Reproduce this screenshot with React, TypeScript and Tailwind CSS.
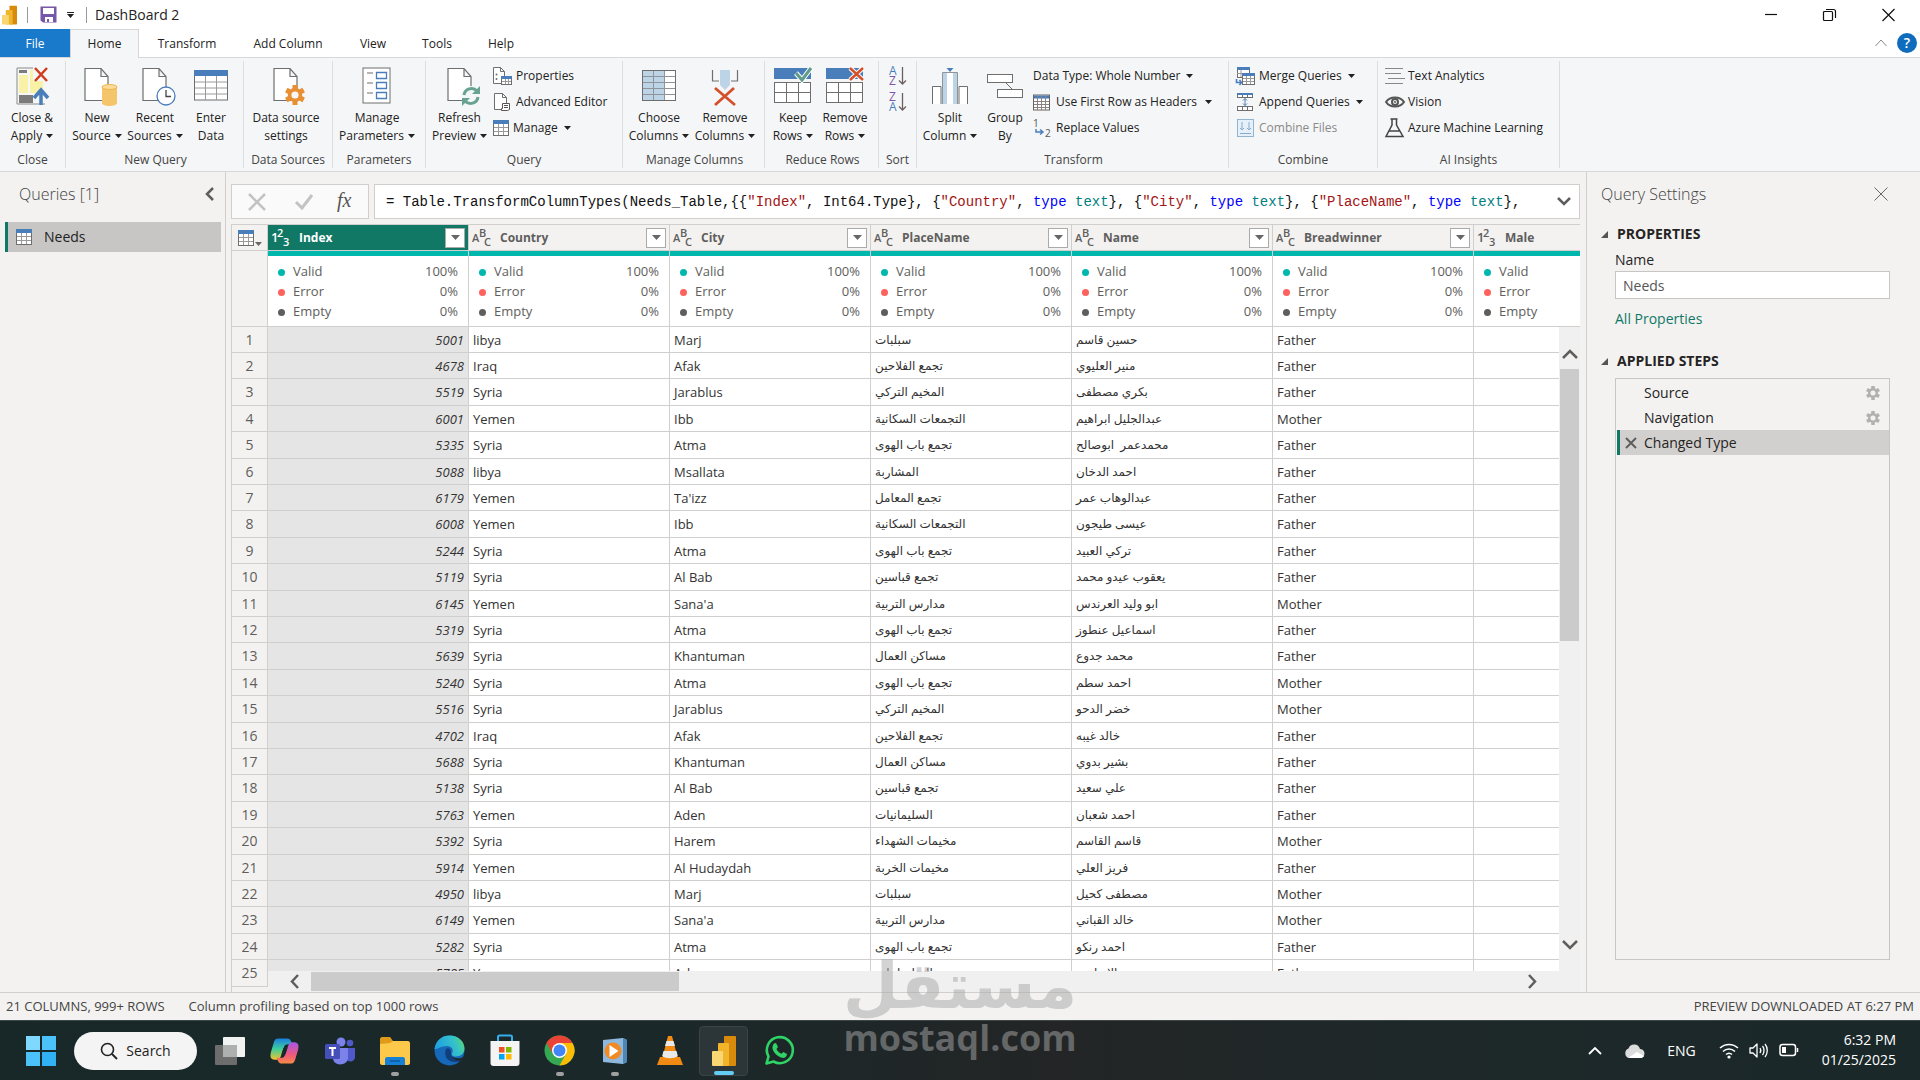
import React from "react";

type Children = { children?: React.ReactNode };

/* ---------- shared glyphs ---------- */

function Caret({ className = "text-[#222]" }: { className?: string }) {
  return (
    <svg width="7" height="4" viewBox="0 0 7 4" className={`inline-block shrink-0 ${className}`} aria-hidden="true">
      <path d="M0 0h7L3.5 4z" fill="currentColor" />
    </svg>
  );
}

function Svg({ w, h, children }: { w: number; h: number } & Children) {
  return (
    <svg width={w} height={h} viewBox={`0 0 ${w} ${h}`} fill="none" className="shrink-0 overflow-visible" aria-hidden="true">
      {children}
    </svg>
  );
}

const gray = "#6e6e6e";
const blue = "#4a7ebb";

function Doc() {
  return <path d="M1 1.5h16l7 8V33.500H1z M17 1.500v8h7" fill="#fff" stroke={gray} strokeWidth="1.200" />;
}

const gearTeeth = [0, 60, 120];

function Gear({ cx, cy, r, color, hole }: { cx: number; cy: number; r: number; color: string; hole: string }) {
  return (
    <g>
      {gearTeeth.map((a) => (
        <rect key={a} x={cx - r * 0.25} y={cy - r} width={r * 0.5} height={r * 2} fill={color} transform={`rotate(${a} ${cx} ${cy})`} />
      ))}
      <circle cx={cx} cy={cy} r={r * 0.72} fill={color} />
      <circle cx={cx} cy={cy} r={r * 0.36} fill={hole} />
    </g>
  );
}

/* ---------- large ribbon icons ---------- */

const CloseApplyIcon = () => (
  <Svg w={32} h={40}>
    <path d="M1 1h16M1 1v36h28" stroke="#8a8a8a" />
    <rect x="3" y="3" width="8" height="3" fill="#7b7b7b" />
    <path d="M3 8h9v18H3z M14 3h3v11h10v12H14z" fill="#f9f1a5" />
    <rect x="3" y="28" width="14" height="8" fill="#7b7b7b" />
    <path d="M19 1l12 13M31 1L19 14" stroke="#d13c1d" strokeWidth="2.500" />
    <path d="M25 38V25M18 31l7-8 7 8" stroke={blue} strokeWidth="3.500" />
  </Svg>
);
const NewSourceIcon = () => (
  <Svg w={34} h={40}>
    <Doc />
    <path d="M18 20v16c0 4 15 4 15 0V20z" fill="#f4c56a" />
    <ellipse cx="25.500" cy="20" rx="7.500" ry="2.500" fill="#fbdc9a" stroke="#efb548" />
  </Svg>
);
const RecentIcon = () => (
  <Svg w={34} h={40}>
    <Doc />
    <circle cx="24" cy="29" r="9" fill="#fff" stroke={blue} strokeWidth="1.300" />
    <path d="M24 23v6.500h5" stroke="#444" strokeWidth="1.300" />
  </Svg>
);
const TableIcon = () => (
  <Svg w={34} h={40}>
    <rect x="0.500" y="4" width="33" height="29" fill="#fff" stroke={gray} />
    <rect x="0" y="3" width="34" height="6" fill={blue} />
    <path d="M1 15h32M1 21h32M1 27h32M11.500 9v24M22.500 9v24" stroke="#9a9a9a" />
  </Svg>
);
const DataSourceIcon = () => (
  <Svg w={34} h={40}>
    <Doc />
    <Gear cx={22} cy={28} r={10} color="#e98f33" hole="#f5f6f7" />
  </Svg>
);
const ParamsIcon = () => (
  <Svg w={30} h={40}>
    <rect x="1" y="1" width="27" height="35" fill="#fff" stroke={gray} />
    <path d="M5 6h6M5 16h6M5 26h6" stroke={gray} />
    <path d="M14.500 5.500h10v6h-10zM14.500 15.500h10v6h-10zM14.500 25.500h10v6h-10z" stroke={blue} strokeWidth="1.300" />
  </Svg>
);
const RefreshIcon = () => (
  <Svg w={34} h={40}>
    <Doc />
    <circle cx="24" cy="29" r="10" fill="#f5f6f7" />
    <path d="M17 28a7.500 7.500 0 0 1 13-4M31 30a7.500 7.500 0 0 1-13 4" stroke="#67a390" strokeWidth="3" />
    <path d="M33 19v8h-8zM15 39v-8h8z" fill="#67a390" />
  </Svg>
);
const ChooseColumnsIcon = () => (
  <Svg w={34} h={40}>
    <rect x="0.500" y="3.500" width="33" height="30" fill="#fff" stroke={gray} />
    <rect x="1" y="4" width="22" height="29" fill="#bdd3e6" />
    <path d="M1 9.500h32M1 15.500h32M1 21.500h32M1 27.500h32M11.500 4v29M22.500 4v29" stroke="#8e9499" />
  </Svg>
);
const RemoveColumnsIcon = () => (
  <Svg w={30} h={40}>
    <path d="M2.500 3v11H9M27.500 3v11H21" stroke={gray} strokeWidth="1.200" />
    <path d="M10 3h10v15l-5 5-5-5z" fill="#bdd3e6" />
    <path d="M5 21l20 17M24 21L5 38" stroke="#d4502b" strokeWidth="2.800" />
  </Svg>
);
const KeepRowsIcon = () => (
  <Svg w={38} h={40}>
    <rect x="0" y="1" width="37" height="11" fill={blue} />
    <rect x="0.500" y="15.500" width="36" height="20" fill="#fff" stroke={gray} />
    <path d="M1 25.500h35M12.500 16v19M24.500 16v19" stroke={gray} />
    <path d="M22 6l6 7L37 1" stroke="#fff" strokeWidth="5" />
    <path d="M22 6l6 7L37 1" stroke="#5f9c8a" strokeWidth="3" />
  </Svg>
);
const RemoveRowsIcon = () => (
  <Svg w={38} h={40}>
    <rect x="0" y="1" width="37" height="11" fill={blue} />
    <rect x="0.500" y="15.500" width="36" height="20" fill="#fff" stroke={gray} />
    <path d="M1 25.500h35M12.500 16v19M24.500 16v19" stroke={gray} />
    <path d="M24 1l13 12M37 1L24 13" stroke="#fff" strokeWidth="4.500" />
    <path d="M24 1l13 12M37 1L24 13" stroke="#d4502b" strokeWidth="2.500" />
  </Svg>
);
const SplitIcon = () => (
  <Svg w={38} h={40}>
    <path d="M1.500 37V19.500H10V37M36.500 37V19.500H28V37" fill="#fff" stroke={gray} />
    <path d="M11.500 37V5.500h15V37" fill="#bdd3e6" stroke="#8e9499" />
    <rect x="16" y="6" width="6" height="31" fill="#fff" />
    <path d="M15.500 1h7L19 5z" fill={blue} />
  </Svg>
);
const GroupByIcon = () => (
  <Svg w={38} h={40}>
    <path d="M20 16l6 6" stroke={gray} />
    <rect x="1.500" y="7.500" width="25" height="8" fill="#fff" stroke={gray} />
    <rect x="11.500" y="22.500" width="25" height="8" fill="#fff" stroke={gray} />
  </Svg>
);

/* ---------- small ribbon icons ---------- */

const PropertiesIcon = () => (
  <Svg w={19} h={18}>
    <path d="M0.500 0.500h7l4 4V16.500h-11zM7.500 0.500v4h4" fill="#fff" stroke={gray} />
    <circle cx="3.500" cy="7.500" r="1" fill={gray} /><circle cx="3.500" cy="12" r="1" fill={gray} />
    <rect x="8.500" y="9.500" width="10" height="8" fill="#fff" stroke={gray} />
    <rect x="8" y="9" width="11" height="3" fill={blue} />
    <path d="M9 14.500h9M12.500 12v5M15.500 12v5" stroke="#999" />
  </Svg>
);
const AdvancedIcon = () => (
  <Svg w={19} h={18}>
    <path d="M1.500 0.500h8l4 4V16.500h-12zM9.500 0.500v4h4" fill="#fff" stroke={gray} />
    <path d="M9.500 10.500h7v6l-2 1h-6v-2h1z" fill="#fff" stroke="#5a5252" />
    <path d="M11 12.500h4M11 14.500h4" stroke="#5a5252" />
  </Svg>
);
const SmallTable = () => (
  <Svg w={16} h={16}>
    <rect x="0.500" y="0.500" width="15" height="15" fill="#fff" stroke={gray} />
    <rect width="16" height="4" fill={blue} />
    <path d="M1 7.500h14M1 11.500h14M5.500 4v11M10.500 4v11" stroke="#9a9a9a" />
  </Svg>
);
const HeadersIcon = () => (
  <Svg w={17} h={17}>
    <rect x="0.500" y="1" width="16" height="15" fill="#fff" stroke="#6a6060" />
    <rect x="1" y="1.500" width="15" height="3" fill={blue} />
    <path d="M1 7.500h15M1 10.500h15M1 13.500h15M4.500 2v14M8.500 2v14M12.500 2v14" stroke="#8a8282" />
  </Svg>
);
const ReplaceIcon = () => (
  <Svg w={19} h={18}>
    <text x="0" y="8" fontSize="10" fill="#555" fontFamily="Open Sans, sans-serif">1</text>
    <text x="12" y="18" fontSize="10" fill="#555" fontFamily="Open Sans, sans-serif">2</text>
    <path d="M3 10v3h6M7 10.500l3 2.500-3 2.500" stroke={blue} strokeWidth="1.500" />
  </Svg>
);
const MergeIcon = () => (
  <Svg w={19} h={18}>
    <rect x="1.500" y="0.500" width="12" height="10" fill="#fff" stroke={gray} /><rect x="1" width="13" height="3" fill={blue} />
    <path d="M1 6.500h6M5 3v7" stroke="#999" />
    <rect x="6.500" y="6.500" width="12" height="11" fill="#fff" stroke={gray} /><rect x="6" y="6" width="13" height="3" fill={blue} />
    <path d="M7 11.500h11M7 14.500h11M10.500 9v8M14.500 9v8" stroke="#999" />
    <path d="M0.500 12v3.500H5M3.500 13l2 2.500-2 2.500" stroke={blue} strokeWidth="1.600" />
  </Svg>
);
const AppendIcon = () => (
  <Svg w={19} h={18}>
    <rect x="1.500" y="0.500" width="15" height="4" fill="#fff" stroke={gray} /><rect x="1" width="16" height="2" fill={blue} />
    <rect x="1.500" y="13.500" width="15" height="4" fill="#fff" stroke={gray} />
    <path d="M6.500 2v2M11.500 2v2M6.500 14v3M11.500 14v3" stroke={gray} />
    <path d="M9 5.500v7M7 7.500l2-2 2 2M7 10.500l2 2 2-2" stroke={blue} />
  </Svg>
);
const CombineIcon = () => (
  <Svg w={19} h={18}>
    <rect x="1.500" y="0.500" width="16" height="17" fill="#e6f0f8" stroke="#92b4d3" />
    <path d="M6 3v8M4 9l2 2 2-2M13 3v8M11 9l2 2 2-2M4 14.500h11" stroke="#86abce" />
  </Svg>
);
const TextAnalyticsIcon = () => (
  <Svg w={20} h={18}><path d="M0 1.500h18M0 6.500h16M3 11.500h17M0 16.500h18" stroke="#888" /></Svg>
);
const VisionIcon = () => (
  <Svg w={20} h={18}>
    <path d="M1 9c4-6 14-6 18 0-4 6-14 6-18 0z" stroke="#555" strokeWidth="2" />
    <circle cx="10" cy="9" r="3" stroke="#555" strokeWidth="2" /><circle cx="10" cy="9" r="1" fill="#555" />
  </Svg>
);
const FlaskIcon = () => (
  <Svg w={20} h={20}>
    <path d="M5.500 1h7M7 1v6L1 18.500h17L11.500 7V1M4 13h11" stroke="#444" strokeWidth="1.500" />
  </Svg>
);
const SortIcon = ({ top, bottom, topColor, bottomColor }: { top: string; bottom: string; topColor: string; bottomColor: string }) => (
  <Svg w={18} h={20}>
    <text x="0" y="9" fontSize="12" fill={topColor} fontFamily="Open Sans, sans-serif">{top}</text>
    <text x="0" y="19" fontSize="12" fill={bottomColor} fontFamily="Open Sans, sans-serif">{bottom}</text>
    <path d="M13.500 1v17M10 14.500l3.500 3.500 3.500-3.500" stroke="#6a6060" strokeWidth="1.300" />
  </Svg>
);

/* ---------- ribbon ---------- */

function Group({ label, className, children }: { label: string; className: string } & Children) {
  return (
    <section className={`flex h-[107px] shrink-0 flex-col border-r border-[#dcdddf] ${className}`} aria-label={label}>
      <div className="flex flex-1 items-start">{children}</div>
      <div className="h-[17px] text-center text-xs leading-[17px] text-[#444]">{label}</div>
    </section>
  );
}

function Big({ icon, top, bottom, caret, className, doc }: { icon: React.ReactNode; top: string; bottom: string; caret?: boolean; doc?: boolean; className: string }) {
  return (
    <button type="button" className={`flex shrink-0 flex-col items-center pt-1.5 ${className}`}>
      <span className={`flex h-[42px] items-start ${doc ? "pl-2" : ""}`}>{icon}</span>
      <span className="whitespace-nowrap leading-[18px]">{top}</span>
      <span className="flex items-center gap-1 whitespace-nowrap leading-[18px]">
        {bottom}
        {caret && <Caret />}
      </span>
    </button>
  );
}

function Small({ icon, text, caret, disabled, className = "gap-1" }: { icon?: React.ReactNode; text: string; caret?: boolean; disabled?: boolean; className?: string }) {
  return (
    <button type="button" disabled={disabled} className={`flex h-[26px] items-center whitespace-nowrap disabled:text-[#8a8a8a] ${className}`}>
      {icon}
      <span>{text}</span>
      {caret && <span className="ml-0.5 flex"><Caret /></span>}
    </button>
  );
}

function Ribbon() {
  return (
    <div className="flex h-[114px] shrink-0 overflow-hidden border-b border-[#d5d7d9] bg-[#f5f6f7] pt-[3px] text-xs text-[#222]">
      <Group label="Close" className="w-[66px]">
        <Big icon={<CloseApplyIcon />} top="Close &" bottom="Apply" caret className="w-16" />
      </Group>
      <Group label="New Query" className="w-[178px] pl-0.5">
        <Big icon={<NewSourceIcon />} top="New" bottom="Source" caret doc className="w-[58px]" />
        <Big icon={<RecentIcon />} top="Recent" bottom="Sources" caret doc className="w-[58px]" />
        <Big icon={<TableIcon />} top="Enter" bottom="Data" className="w-[54px]" />
      </Group>
      <Group label="Data Sources" className="w-[89px]">
        <Big icon={<DataSourceIcon />} top="Data source" bottom="settings" doc className="w-[84px]" />
      </Group>
      <Group label="Parameters" className="w-[93px]">
        <Big icon={<ParamsIcon />} top="Manage" bottom="Parameters" caret className="w-[88px]" />
      </Group>
      <Group label="Query" className="w-[197px]">
        <Big icon={<RefreshIcon />} top="Refresh" bottom="Preview" caret doc className="w-[67px]" />
        <div className="flex flex-col pt-0.5">
          <Small icon={<PropertiesIcon />} text="Properties" />
          <Small icon={<AdvancedIcon />} text="Advanced Editor" />
          <Small icon={<SmallTable />} text="Manage" caret />
        </div>
      </Group>
      <Group label="Manage Columns" className="w-[142px] pl-0.5">
        <Big icon={<ChooseColumnsIcon />} top="Choose" bottom="Columns" caret className="w-[68px]" />
        <Big icon={<RemoveColumnsIcon />} top="Remove" bottom="Columns" caret className="w-[64px]" />
      </Group>
      <Group label="Reduce Rows" className="w-[114px] pl-0.5">
        <Big icon={<KeepRowsIcon />} top="Keep" bottom="Rows" caret className="w-[52px]" />
        <Big icon={<RemoveRowsIcon />} top="Remove" bottom="Rows" caret className="w-[52px]" />
      </Group>
      <Group label="Sort" className="w-[38px]">
        <div className="flex flex-1 flex-col items-center gap-1.5 pt-[5px]">
          <button type="button" aria-label="Sort ascending"><SortIcon top="A" bottom="Z" topColor="#4a7ebb" bottomColor="#7b56a5" /></button>
          <button type="button" aria-label="Sort descending"><SortIcon top="Z" bottom="A" topColor="#7b56a5" bottomColor="#4a7ebb" /></button>
        </div>
      </Group>
      <Group label="Transform" className="w-[312px] pl-0.5">
        <Big icon={<SplitIcon />} top="Split" bottom="Column" caret className="w-[62px]" />
        <Big icon={<GroupByIcon />} top="Group" bottom="By" className="w-[48px]" />
        <div className="flex flex-col pl-1 pt-0.5">
          <Small text="Data Type: Whole Number" caret />
          <Small icon={<HeadersIcon />} text="Use First Row as Headers" caret className="gap-1.5" />
          <Small icon={<ReplaceIcon />} text="Replace Values" />
        </div>
      </Group>
      <Group label="Combine" className="w-[149px]">
        <div className="flex flex-col pl-[7px] pt-0.5">
          <Small icon={<MergeIcon />} text="Merge Queries" caret />
          <Small icon={<AppendIcon />} text="Append Queries" caret />
          <Small icon={<CombineIcon />} text="Combine Files" disabled />
        </div>
      </Group>
      <Group label="AI Insights" className="w-[182px]">
        <div className="flex flex-col pl-[7px] pt-0.5">
          <Small icon={<TextAnalyticsIcon />} text="Text Analytics" className="gap-[3px]" />
          <Small icon={<VisionIcon />} text="Vision" className="gap-[3px]" />
          <Small icon={<FlaskIcon />} text="Azure Machine Learning" className="gap-[3px]" />
        </div>
      </Group>
    </div>
  );
}

/* ---------- title bar and tabs ---------- */

function PowerBi({ w, h }: { w: number; h: number }) {
  return (
    <svg width={w} height={h} viewBox="0 0 24 30" aria-hidden="true">
      <rect x="12" y="0" width="12" height="30" rx="1" fill="#d98a0b" />
      <rect x="6" y="7" width="11" height="23" rx="1" fill="#f0b52a" />
      <rect x="0" y="15" width="11" height="15" rx="1" fill="#f8d674" />
    </svg>
  );
}

function TitleBar() {
  return (
    <header className="flex h-[29px] shrink-0 items-center bg-white pl-0.5">
      <PowerBi w={15} h={20} />
      <span className="ml-2.5 h-4 w-px bg-[#999]" />
      <button type="button" aria-label="Save" className="ml-3">
        <svg width="17" height="17" viewBox="0 0 17 17" aria-hidden="true">
          <path d="M0.500 0.500h16v16H3l-2.500-2z" fill="#7757a8" />
          <path d="M3 2h11v6H3z" fill="#fff" /><path d="M5 11h8v5H5z" fill="#fff" /><path d="M7 13h2v3H7z" fill="#7757a8" />
        </svg>
      </button>
      <button type="button" aria-label="Customize toolbar" className="ml-2.5 flex flex-col items-center gap-px">
        <span className="h-px w-[7px] bg-[#222]" />
        <Caret />
      </button>
      <span className="ml-3 h-4 w-px bg-[#999]" />
      <h1 className="ml-2 text-sm">DashBoard 2</h1>
      <div className="ml-auto flex pr-4">
        <button type="button" aria-label="Minimize" className="mr-[46px]"><Svg w={12} h={12}><path d="M0 5.500h12" stroke="#111" strokeWidth="1.200" /></Svg></button>
        <button type="button" aria-label="Restore" className="mr-[46px]">
          <Svg w={13} h={12}><rect x="0.500" y="2.500" width="9" height="9" rx="1" stroke="#111" strokeWidth="1.200" /><path d="M3 0.500h7.500a2 2 0 0 1 2 2V9" stroke="#111" strokeWidth="1.200" /></Svg>
        </button>
        <button type="button" aria-label="Close" className="mr-[9px]"><Svg w={13} h={12}><path d="M0.500 0l12 12M12.500 0l-12 12" stroke="#111" strokeWidth="1.200" /></Svg></button>
      </div>
    </header>
  );
}

function Tabs() {
  return (
    <nav className="flex h-[29px] shrink-0 border-b border-[#d5d7d9] bg-white text-xs">
      <button type="button" className="h-[28px] w-[70px] bg-[#1979ca] pt-0.5 text-white">File</button>
      <button type="button" className="-mb-px w-[69px] border border-b-0 border-[#d5d7d9] bg-[#f5f6f7]">Home</button>
      <button type="button" className="w-[96px] pt-0.5">Transform</button>
      <button type="button" className="w-[106px] pt-0.5">Add Column</button>
      <button type="button" className="w-[64px] pt-0.5">View</button>
      <button type="button" className="w-[64px] pt-0.5">Tools</button>
      <button type="button" className="w-[64px] pt-0.5">Help</button>
      <div className="ml-auto flex items-center gap-2.5 pr-[3px]">
        <button type="button" aria-label="Collapse ribbon"><Svg w={12} h={8}><path d="M0.500 7L6 1l5.500 6" stroke="#888" /></Svg></button>
        <button type="button" aria-label="Help center" className="size-5 rounded-full bg-[#0f6cbd] text-sm font-semibold leading-5 text-white">?</button>
      </div>
    </nav>
  );
}

/* ---------- data ---------- */

type Row = [string, string, string, string, string, string];

const rows: Row[] = [
  ["5001", "libya", "Marj", "سبلبات", "حسين قاسم", "Father"],
  ["4678", "Iraq", "Afak", "تجمع الفلاحين", "منير العليوي", "Father"],
  ["5519", "Syria", "Jarablus", "المخيم التركي", "بكري مصطفى", "Father"],
  ["6001", "Yemen", "Ibb", "التجمعات السكانية", "عبدالجليل ابراهيم", "Mother"],
  ["5335", "Syria", "Atma", "تجمع باب الهوى", "محمدعمر  ابوصالح", "Father"],
  ["5088", "libya", "Msallata", "المشاربة", "احمد الدخان", "Father"],
  ["6179", "Yemen", "Ta'izz", "تجمع المعامل", "عبدالوهاب عمر", "Father"],
  ["6008", "Yemen", "Ibb", "التجمعات السكانية", "عيسى طيجون", "Father"],
  ["5244", "Syria", "Atma", "تجمع باب الهوى", "تركي العبيد", "Father"],
  ["5119", "Syria", "Al Bab", "تجمع قباسين", "يعقوب عيدو محمد", "Father"],
  ["6145", "Yemen", "Sana'a", "مدارس التربية", "ابو وليد العرندس", "Mother"],
  ["5319", "Syria", "Atma", "تجمع باب الهوى", "اسماعيل عنطوز", "Father"],
  ["5639", "Syria", "Khantuman", "مساكن العمال", "محمد جدوع", "Father"],
  ["5240", "Syria", "Atma", "تجمع باب الهوى", "احمد سطم", "Mother"],
  ["5516", "Syria", "Jarablus", "المخيم التركي", "خضر الدحو", "Mother"],
  ["4702", "Iraq", "Afak", "تجمع الفلاحين", "خالد غيبه", "Father"],
  ["5688", "Syria", "Khantuman", "مساكن العمال", "بشير بدوي", "Father"],
  ["5138", "Syria", "Al Bab", "تجمع قباسين", "علي سعيد", "Father"],
  ["5763", "Yemen", "Aden", "السليمانيات", "احمد شعبان", "Father"],
  ["5392", "Syria", "Harem", "مخيمات الشهداء", "قاسم القاسم", "Mother"],
  ["5914", "Yemen", "Al Hudaydah", "مخيمات الخربة", "فريز العلي", "Father"],
  ["4950", "libya", "Marj", "سبلبات", "مصطفى كحيل", "Mother"],
  ["6149", "Yemen", "Sana'a", "مدارس التربية", "خالد القباني", "Mother"],
  ["5282", "Syria", "Atma", "تجمع باب الهوى", "احمد رنكو", "Father"],
  ["5785", "Yemen", "Aden", "السليمانيات", "عمر الابراهيم", "Father"],
];

const columns = [
  { name: "Index", numeric: true },
  { name: "Country", numeric: false },
  { name: "City", numeric: false },
  { name: "PlaceName", numeric: false },
  { name: "Name", numeric: false },
  { name: "Breadwinner", numeric: false },
  { name: "Male", numeric: true },
];

function TypeIcon({ numeric }: { numeric: boolean }) {
  const [a, b, c] = numeric ? ["1", "2", "3"] : ["A", "B", "C"];
  return (
    <svg width="20" height="20" viewBox="0 0 20 20" className="shrink-0 overflow-visible" fill="currentColor" fontFamily="Open Sans, sans-serif" fontSize="11" fontWeight="600" aria-hidden="true">
      <text x="0" y="14" fontSize={numeric ? 13 : 11}>{a}</text>
      <text x={numeric ? 6 : 7} y="9">{b}</text>
      <text x="12" y="18">{c}</text>
    </svg>
  );
}

const stats = [
  { label: "Valid", value: "100%", dot: "bg-[#00b7ad]" },
  { label: "Error", value: "0%", dot: "bg-[#fd625e]" },
  { label: "Empty", value: "0%", dot: "bg-[#605e5c]" },
];

const line = "border-[#d0cfce]";

function DataTable() {
  return (
    <table className="w-[1443px] table-fixed border-separate border-spacing-0 text-xs text-[#333]">
      <colgroup>
        <col className="w-[36px]" />
        {columns.map((c) => <col key={c.name} className="w-[201px]" />)}
      </colgroup>
      <thead>
        <tr className="h-[26px]">
          <th className={`border-b border-r p-0 ${line}`}>
            <button type="button" aria-label="Table options" className="flex items-end gap-px pl-1.5">
              <SmallTable /><Caret className="text-[#666]" />
            </button>
          </th>
          {columns.map((c, i) => (
            <th key={c.name} scope="col" className={`border-b border-r p-0 ${line} ${i === 0 ? "bg-[#117865] text-white" : "bg-[#f3f2f1] text-[#605e5c]"}`}>
              <div className="flex items-center pl-[3px] pr-[3px]">
                <TypeIcon numeric={c.numeric} />
                <span className="ml-2 flex-1 text-left font-bold">{c.name}</span>
                <button type="button" aria-label={`Filter ${c.name}`} className="flex size-5 items-center justify-center border border-[#aaa] bg-white">
                  <svg width="9" height="5" viewBox="0 0 9 5" aria-hidden="true"><path d="M0 0h9L4.500 5z" fill="#666" /></svg>
                </button>
              </div>
            </th>
          ))}
        </tr>
        <tr className="h-[76px]">
          <td className={`border-b border-r p-0 ${line}`} />
          {columns.map((c) => (
            <td key={c.name} className={`border-b border-r bg-white p-0 align-top text-[13px] text-[#605e5c] ${line}`}>
              <div className="h-[5px] bg-[#00b7ad]" />
              <dl className="pl-2.5 pr-2.5 pt-[6px]">
                {stats.map((s) => (
                  <div key={s.label} className="flex h-5 items-center">
                    <span className={`mr-2 size-[7px] rounded-full ${s.dot}`} />
                    <dt className="flex-1">{s.label}</dt>
                    <dd>{s.value}</dd>
                  </div>
                ))}
              </dl>
            </td>
          ))}
        </tr>
      </thead>
      <tbody>
        {rows.map((r, i) => (
          <tr key={i} className={(i + 1) % 5 === 3 || (i + 1) % 5 === 0 ? "h-[27px]" : "h-[26px]"}>
            <th scope="row" className={`border-b border-r p-0 text-center text-sm font-normal text-[#605e5c] ${line}`}>{i + 1}</th>
            {r.map((v, j) => {
              if (j === 0) return <td key={j} className={`border-b border-r bg-[#e5e5e5] p-0 pr-1 text-right text-[13px] italic leading-5 ${line}`}>{v}</td>;
              const arabic = j === 3 || j === 4;
              return (
                <td key={j} className={`whitespace-pre border-b border-r bg-white p-0 pl-1 leading-5 ${line} ${arabic ? "text-xs" : "text-[13px]"}`}>
                  {arabic ? <bdi lang="ar">{v}</bdi> : v}
                </td>
              );
            })}
            <td className={`border-b border-r bg-white p-0 ${line}`} />
          </tr>
        ))}
      </tbody>
    </table>
  );
}

function Chevron({ d, w, h, color = "#605e5c", sw = 2.5 }: { d: string; w: number; h: number; color?: string; sw?: number }) {
  return <Svg w={w} h={h}><path d={d} stroke={color} strokeWidth={sw} /></Svg>;
}

const Str = ({ children }: Children) => <span className="text-[#a31515]">{children}</span>;
const TypeText = () => (<><span className="text-[#0000ff]">type</span> <span className="text-[#008080]">text</span></>);

function Editor() {
  return (
    <main className="flex min-w-0 flex-1 flex-col border-l border-[#d0cfce] bg-[#f3f2f1] pl-[5px] pr-1.5 pt-3">
      <div className="flex h-[35px] shrink-0 gap-[5px]">
        <div className="flex w-[138px] shrink-0 items-center border border-[#d0cfce] bg-[#fafafa] pl-[15px]">
          <button type="button" aria-label="Cancel formula"><Chevron w={20} h={18} d="M2 1l16 16M18 1L2 17" color="#c4c3c2" /></button>
          <button type="button" aria-label="Accept formula" className="ml-7"><Chevron w={18} h={16} d="M1 8l6 6L17 1" color="#c4c3c2" sw={3} /></button>
          <span className="ml-6 pb-1 font-['Liberation_Serif',serif] text-xl leading-6 italic text-[#555]">fx</span>
        </div>
        <div className="flex min-w-0 flex-1 items-center justify-between border border-[#d0cfce] bg-white pl-[11px] pr-2">
          <code className="truncate font-['Liberation_Mono',monospace] text-sm text-[#111]">
            = Table.TransformColumnTypes(Needs_Table,{"{{"}<Str>"Index"</Str>, Int64.Type{"}, {"}<Str>"Country"</Str>, <TypeText />{"}, {"}<Str>"City"</Str>, <TypeText />{"}, {"}<Str>"PlaceName"</Str>, <TypeText />{"},"}
          </code>
          <button type="button" aria-label="Expand formula"><Chevron w={14} h={9} d="M1 1l6 6 6-6" /></button>
        </div>
      </div>
      <div className="relative mt-[5px] min-h-0 flex-1 overflow-hidden border-l border-t border-[#d0cfce]">
        <DataTable />
        <div className="absolute bottom-5 right-0 top-[102px] flex w-[21px] flex-col items-center bg-[#f0f0f0] pb-[22px] pt-[22px]">
          <Chevron w={16} h={10} d="M1 9l7-7 7 7" />
          <div className="mt-2.5 h-[272px] w-[19px] bg-[#cbcbcb]" />
          <div className="mt-auto flex"><Chevron w={16} h={10} d="M1 1l7 7 7-7" /></div>
        </div>
        <div className="absolute bottom-0 left-9 right-0 flex h-[21px] items-center bg-[#f0f0f0] pl-[22px] pr-[43px]">
          <Chevron w={10} h={15} d="M8 1L2 7.500 8 14" />
          <div className="ml-[11px] h-[19px] w-[368px] bg-[#cbcbcb]" />
          <div className="ml-auto flex"><Chevron w={10} h={15} d="M2 1l6 6.500L2 14" /></div>
        </div>
      </div>
    </main>
  );
}

/* ---------- side panes ---------- */

function Queries() {
  return (
    <aside className="flex w-[225px] shrink-0 flex-col bg-[#f3f2f1] pl-[5px] pr-1">
      <div className="flex h-11 items-center justify-between pl-3.5 pr-1.5">
        <h2 className="text-base font-light text-[#444]">Queries [1]</h2>
        <button type="button" aria-label="Collapse queries"><Chevron w={10} h={14} d="M8 1L2 7l6 6" /></button>
      </div>
      <button type="button" className="mt-1.5 flex h-[30px] items-center border-l-[3px] border-[#117865] bg-[#c8c6c4] pl-2 text-sm">
        <SmallTable /><span className="ml-3">Needs</span>
      </button>
    </aside>
  );
}

function Section({ children }: Children) {
  return (
    <h3 className="flex h-5 items-center gap-[9px] text-sm font-bold text-[#252423]">
      <Svg w={7} h={7}><path d="M7 0v7H0z" fill="#555" /></Svg>
      {children}
    </h3>
  );
}

function Step({ name, selected, gear }: { name: string; selected?: boolean; gear?: boolean }) {
  return (
    <li className={`flex h-[25px] items-center pr-[9px] ${selected ? "border-l-[3px] border-[#117865] bg-[#d2d0ce] pl-[5px]" : "pl-2"}`}>
      <button type="button" aria-label={`Delete ${name}`} className="w-[19px]">{selected && <Chevron w={12} h={12} d="M1 1l10 10M11 1L1 11" sw={2} />}</button>
      <span className="flex-1">{name}</span>
      {gear && <button type="button" aria-label={`Edit ${name}`}><Svg w={14} h={14}><Gear cx={7} cy={7} r={7} color="#b3b0ad" hole="#f3f2f1" /></Svg></button>}
    </li>
  );
}

function Settings() {
  return (
    <aside className="flex w-[334px] shrink-0 flex-col border-l border-[#d0cfce] bg-[#f3f2f1] pb-8 pl-[14px] pr-[30px] text-sm text-[#252423]">
      <div className="flex h-11 shrink-0 items-center justify-between">
        <h2 className="text-base font-light text-[#444]">Query Settings</h2>
        <button type="button" aria-label="Close settings" className="mr-0.5"><Svg w={14} h={14}><path d="M0.500 0.500l13 13M13.500 0.500l-13 13" stroke="#666" /></Svg></button>
      </div>
      <div className="mt-2"><Section>PROPERTIES</Section></div>
      <div className="flex flex-col pl-[14px]">
        <label htmlFor="query-name" className="mt-1.5 h-5 leading-5">Name</label>
        <input id="query-name" defaultValue="Needs" className="mt-px h-7 border border-[#c8c6c4] bg-white px-[7px] text-[#555]" />
        <a href="#properties" className="mt-2.5 h-5 leading-5 text-[#117865]">All Properties</a>
      </div>
      <div className="mt-[22px]"><Section>APPLIED STEPS</Section></div>
      <ol className="ml-[14px] mt-[7px] flex-1 border border-[#c8c6c4] pl-px pt-px">
        <Step name="Source" gear />
        <Step name="Navigation" gear />
        <Step name="Changed Type" selected />
      </ol>
    </aside>
  );
}

/* ---------- taskbar ---------- */

function Slot({ label, className, dot, children }: { label: string; className: string; dot?: boolean } & Children) {
  return (
    <button type="button" aria-label={label} className={`relative flex h-[50px] shrink-0 items-center justify-center ${className}`}>
      {children}
      {dot && <span className="absolute bottom-0 h-1 w-2 rounded-full bg-[#a0a0a0]" />}
    </button>
  );
}

function TaskIcons() {
  return (
    <>
      <Slot label="Start" className="w-[30px]">
        <Svg w={30} h={30}><path d="M0 0h14v14H0z" fill="#7fd8ff" /><path d="M16 0h14v14H16zM0 16h14v14H0z" fill="#4cc2fb" /><path d="M16 16h14v14H16z" fill="#2fb1f3" /></Svg>
      </Slot>
      <button type="button" className="ml-[18px] flex h-[38px] w-[123px] items-center justify-center gap-2 rounded-full bg-[#f4f4f4] text-sm text-[#222]">
        <Svg w={18} h={18}><circle cx="7.500" cy="7.500" r="6" stroke="#222" strokeWidth="1.600" /><path d="M12 12l5 5" stroke="#222" strokeWidth="1.800" /></Svg>
        Search
      </button>
      <Slot label="Task view" className="ml-[5px] w-[55px]">
        <Svg w={30} h={30}><rect x="8" y="1" width="22" height="20" rx="1" fill="#f2f2f2" /><rect x="0" y="9" width="22" height="20" rx="1" fill="#6d6d6d" /><rect x="8" y="9" width="14" height="12" fill="#aeb0b0" /></Svg>
      </Slot>
      <Slot label="Copilot" className="w-[55px]">
        <svg width="29" height="28" viewBox="0 0 30 28" aria-hidden="true">
          <defs>
            <linearGradient id="cpa" x1="0" y1="0" x2="0" y2="1"><stop stopColor="#1b7fe0" /><stop offset=".5" stopColor="#3ecf9a" /><stop offset="1" stopColor="#f2c12e" /></linearGradient>
            <linearGradient id="cpb" x1="0" y1="0" x2="0" y2="1"><stop stopColor="#a657e8" /><stop offset=".6" stopColor="#ee5a7a" /><stop offset="1" stopColor="#f78b45" /></linearGradient>
          </defs>
          <path d="M9 1h9c3 0 4 3 5 6h-4c-3 0-4 1-5 4l-3 9c-1 2-2 3-4 3H5c-5 0-5-4-4-8L4 5c1-3 2-4 5-4z" fill="url(#cpa)" />
          <path d="M21 27h-9c-3 0-4-3-5-6h4c3 0 4-1 5-4l3-9c1-2 2-3 4-3h2c5 0 5 4 4 8l-3 10c-1 3-2 4-5 4z" fill="url(#cpb)" />
          <path d="M14 11h4l-2 6h-4z" fill="#1b2829" />
        </svg>
      </Slot>
      <Slot label="Teams" className="w-[55px]">
        <Svg w={30} h={28}>
          <circle cx="16" cy="5" r="4.500" fill="#7b83eb" /><circle cx="25" cy="6" r="3.300" fill="#5059c9" />
          <path d="M21 11h9v9c0 5-7 6-9 2z" fill="#5059c9" /><path d="M8 11h15v10c0 8-15 9-15 0z" fill="#7b83eb" />
          <rect x="0" y="7" width="15" height="15" rx="1.500" fill="#464eb8" /><path d="M4 11h7M7.500 11v8" stroke="#fff" strokeWidth="2" />
        </Svg>
      </Slot>
      <Slot label="File Explorer" dot className="w-[55px]">
        <Svg w={30} h={28}>
          <path d="M0 2c0-1 1-2 2-2h8l3 4h15v8H0z" fill="#e09a1a" /><path d="M0 7l10-1 3-2h15c1 0 2 1 2 2v20c0 1-1 2-2 2H2c-1 0-2-1-2-2z" fill="#fcc94a" />
          <path d="M5 28v-6c0-1 1-2 2-2h16c1 0 2 1 2 2v6z" fill="#1680d4" /><path d="M10 24h10" stroke="#0b5aa0" strokeWidth="1.500" />
        </Svg>
      </Slot>
      <Slot label="Edge" className="w-[55px]">
        <svg width="31" height="31" viewBox="0 0 31 31" aria-hidden="true">
          <defs>
            <linearGradient id="ed" x1="0" y1="0.300" x2="1" y2="0"><stop stopColor="#1fa0e0" /><stop offset=".6" stopColor="#35c1c9" /><stop offset="1" stopColor="#5fdc6a" /></linearGradient>
          </defs>
          <circle cx="15.500" cy="15.500" r="15" fill="#1668b8" />
          <path d="M0.500 14C2 5 8 0.500 15.500 0.500c9 0 15 6 15 13 0 5-4 8-8.500 8-4 0-5-2-4-3.500 2-3 0-7-5-7-6 0-11 4-12.500 3z" fill="url(#ed)" />
          <path d="M12 14c-3 7 2 14 11 13 2 0 4-1 5-2-5 1-12-2-11-8 0-3-3-5-5-3z" fill="#123f7c" />
          <path d="M17 18c0 4 5 7 13 4l-1 3c-4 2-11 0-12-7z" fill="#1c2a2c" />
        </svg>
      </Slot>
      <Slot label="Microsoft Store" className="w-[55px]">
        <Svg w={30} h={31}>
          <path d="M8 6V2c0-1 .5-1.500 1.500-1.500h11c1 0 1.500.5 1.500 1.500v4" stroke="#35aef0" strokeWidth="2" />
          <path d="M0.500 6h29v22c0 2-1 3-3 3h-23c-2 0-3-1-3-3z" fill="#f4f4f4" />
          <path d="M9 12h5.500v5.500H9z" fill="#f25022" /><path d="M16 12h5.500v5.500H16z" fill="#7fba00" /><path d="M9 19h5.500v5.500H9z" fill="#00a4ef" /><path d="M16 19h5.500v5.500H16z" fill="#ffb900" />
        </Svg>
      </Slot>
      <Slot label="Chrome" dot className="w-[55px]">
        <Svg w={31} h={31}>
          <circle cx="15.500" cy="15.500" r="15" fill="#34a853" />
          <path d="M15.500 15.500L2.500 8A15 15 0 0 1 28.500 8z" fill="#ea4335" />
          <path d="M15.500 8h13a15 15 0 0 1-13 22.500L22 19z" fill="#fbbc05" />
          <path d="M2.500 8L9 19l6.500-8z" fill="#ea4335" />
          <circle cx="15.500" cy="15.500" r="7.500" fill="#fff" /><circle cx="15.500" cy="15.500" r="6" fill="#4285f4" />
        </Svg>
      </Slot>
      <Slot label="Media Player" dot className="w-[55px]">
        <Svg w={26} h={26}>
          <path d="M1 2l20-2 4 2v22l-4 2L1 24z" fill="#8db9de" /><path d="M21 0l4 2v22l-4 2z" fill="#4f86b8" />
          <circle cx="11" cy="13" r="8.500" fill="#f08a24" /><path d="M7.500 7l9 6-9 6z" fill="#fff" />
        </Svg>
      </Slot>
      <Slot label="VLC" className="w-[56px]">
        <Svg w={26} h={29}>
          <path d="M3 21h20l3 8H0z" fill="#f08a12" /><path d="M11 0h4l6 23c-4 3-12 3-16 0z" fill="#f38b15" />
          <path d="M9.500 5h7l1.500 5H8zM6.500 15h13l1.300 5c-4 3-12 3-15.600 0z" fill="#e9e9e9" />
        </Svg>
      </Slot>
      <Slot label="Power BI" className="ml-px w-[49px] rounded border border-[#3a4446] bg-[#2c3537]">
        <PowerBi w={24} h={30} />
        <span className="absolute bottom-0 h-1 w-5 rounded-full bg-[#62cdf5]" />
      </Slot>
      <Slot label="WhatsApp" className="ml-[6px] w-[50px]">
        <Svg w={31} h={31}>
          <path d="M2.500 28.500l2-7A13 13 0 1 1 9.500 26.500z" stroke="#2fd366" strokeWidth="2.600" strokeLinejoin="round" />
          <path d="M10 8.500l2-.5 2 4-1.500 2c1 2.500 3 4 5 4.800l1.800-1.800 3.700 2-.5 2c-1 2-3.500 2.300-5.500 1.500-4-1.500-7.500-5-8.500-9-.3-2 .5-4 1.500-5z" fill="#2fd366" />
        </Svg>
      </Slot>
    </>
  );
}

function Taskbar() {
  return (
    <footer className="flex h-[60px] shrink-0 items-center border-t border-[#3d4648] bg-[linear-gradient(90deg,#182829_0%,#1b2829_35%,#232526_55%,#1e2829_75%,#1a2829_100%)] pl-[26px] pr-6 text-white">
      <TaskIcons />
      <div className="ml-auto flex items-center">
        <Chevron w={14} h={9} d="M1 8l6-6 6 6" color="#fff" sw={1.8} />
        <span className="ml-[22px] flex"><Svg w={21} h={14}><path d="M5 14a5 5 0 0 1-.5-9.500A6 6 0 0 1 16 5a4.500 4.500 0 0 1 0 9z" fill="#dcdcdc" /><path d="M4 14L13 8l7 4c-1 1.500-2 2-4 2z" fill="#fff" /></Svg></span>
        <span className="ml-[22px] text-sm">ENG</span>
        <span className="ml-[23px] flex items-center gap-2.5">
          <Svg w={20} h={17}>
            <path d="M1 6a13 13 0 0 1 18 0M4 9.500a8.500 8.500 0 0 1 12 0M7 12.500a4.500 4.500 0 0 1 6 0" stroke="#fff" strokeWidth="1.500" /><circle cx="10" cy="15" r="1.600" fill="#fff" />
          </Svg>
          <Svg w={20} h={17}>
            <path d="M1 6h3l4-4v13l-4-4H1z" stroke="#fff" strokeWidth="1.300" strokeLinejoin="round" /><path d="M11 6c1 1.500 1 3.500 0 5M13.500 4c2 2.500 2 6.500 0 9M16 2c3 3.500 3 9.500 0 13" stroke="#fff" strokeWidth="1.300" />
          </Svg>
          <Svg w={20} h={15}>
            <rect x="1" y="1.500" width="15.500" height="11" rx="2.500" stroke="#fff" strokeWidth="1.500" /><rect x="3" y="4" width="4" height="6" fill="#fff" /><path d="M18.500 5v4" stroke="#fff" strokeWidth="1.500" />
          </Svg>
        </span>
        <div className="ml-[23px] pb-0.5 text-right text-sm leading-5">
          <div>6:32 PM</div>
          <div>01/25/2025</div>
        </div>
      </div>
    </footer>
  );
}

export default function App() {
  return (
    <div className="relative flex h-screen flex-col overflow-hidden bg-[#f3f2f1] font-['Open_Sans','DejaVu_Sans',sans-serif] text-[#222]">
      <TitleBar />
      <Tabs />
      <Ribbon />
      <div className="flex min-h-0 flex-1">
        <Queries />
        <Editor />
        <Settings />
      </div>
      <div className="flex h-[28px] shrink-0 items-center justify-between border-t border-[#d0cfce] bg-[#f3f2f1] px-1.5 text-[13px] text-[#444]">
        <div className="flex gap-6">
          <span>21 COLUMNS, 999+ ROWS</span>
          <span>Column profiling based on top 1000 rows</span>
        </div>
        <span>PREVIEW DOWNLOADED AT 6:27 PM</span>
      </div>
      <Taskbar />
      <div className="pointer-events-none absolute bottom-5 left-1/2 flex w-[240px] -translate-x-1/2 flex-col items-center text-[#a8a8a8] opacity-50">
        <span lang="ar" className="text-[64px] font-bold leading-[64px]">مستقل</span>
        <span className="text-4xl font-bold leading-[44px]">mostaql.com</span>
      </div>
    </div>
  );
}
